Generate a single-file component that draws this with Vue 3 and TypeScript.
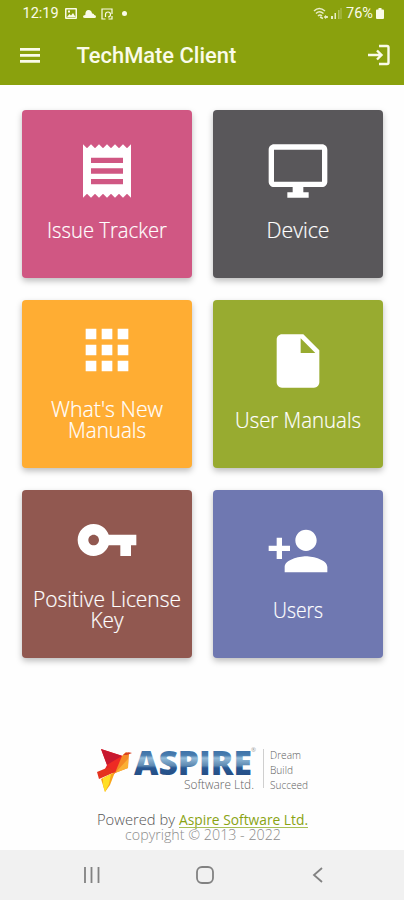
<script setup lang="ts">
interface Tile {
  id: string
  lines: string[]
  widths: number[]
  color: string
  path: string
}

const tiles: Tile[] = [
  {
    id: 'issues',
    lines: ['Issue Tracker'],
    widths: [120],
    color: '#d05783',
    path: 'M18 17H6v-2h12v2zm0-4H6v-2h12v2zm0-4H6V7h12v2zM3 22l1.5-1.5L6 22l1.5-1.5L9 22l1.5-1.5L12 22l1.5-1.5L15 22l1.5-1.5L18 22l1.5-1.5L21 22V2l-1.5 1.5L18 2l-1.5 1.5L15 2l-1.5 1.5L12 2l-1.5 1.5L9 2 7.5 3.5 6 2 4.5 3.5 3 2v20z',
  },
  {
    id: 'device',
    lines: ['Device'],
    widths: [63],
    color: '#59575a',
    path: 'M21 2H3c-1.1 0-2 .9-2 2v12c0 1.1.9 2 2 2h7v2H8v2h8v-2h-2v-2h7c1.1 0 2-.9 2-2V4c0-1.1-.9-2-2-2zm0 14H3V4h18v12z',
  },
  {
    id: 'news',
    lines: ["What's New", 'Manuals'],
    widths: [112, 78],
    color: '#ffad33',
    path: 'M4 8h4V4H4v4zm6 12h4v-4h-4v4zm-6 0h4v-4H4v4zm0-6h4v-4H4v4zm6 0h4v-4h-4v4zm6-10v4h4V4h-4zm-6 4h4V4h-4v4zm6 6h4v-4h-4v4zm0 6h4v-4h-4v4z',
  },
  {
    id: 'manuals',
    lines: ['User Manuals'],
    widths: [126],
    color: '#98ab30',
    path: 'M6 2c-1.1 0-1.99.9-1.99 2L4 20c0 1.1.89 2 1.99 2H18c1.1 0 2-.9 2-2V8l-6-6H6zm7 7V3.5L18.5 9H13z',
  },
  {
    id: 'license',
    lines: ['Positive License', 'Key'],
    widths: [148, 33],
    color: '#915850',
    path: 'M12.65 10C11.83 7.67 9.61 6 7 6c-3.31 0-6 2.69-6 6s2.69 6 6 6c2.61 0 4.83-1.67 5.65-4H17v4h4v-4h2v-4H12.65zM7 14c-1.1 0-2-.9-2-2s.9-2 2-2 2 .9 2 2-.9 2-2 2z',
  },
  {
    id: 'users',
    lines: ['Users'],
    widths: [50],
    color: '#6f78b1',
    path: 'M15 12c2.21 0 4-1.79 4-4s-1.79-4-4-4-4 1.79-4 4 1.79 4 4 4zm-9-2V7H4v3H1v2h3v3h2v-3h3v-2H6zm9 4c-2.67 0-8 1.34-8 4v2h16v-2c0-2.66-5.33-4-8-4z',
  },
]
</script>

<template>
  <div class="screen">
    <header class="header">
      <div class="status">
        <span class="clock">12:19</span>
        <svg class="picture" viewBox="0 0 12 11"><path fill-rule="evenodd" d="M1 0h10q1 0 1 1v9q0 1-1 1H1q-1 0-1-1V1q0-1 1-1zm.5 1.5v8h9v-8zM2 9l2.500-3 1.500 1.500L8 5l2.500 4zM3 2.500h2v2H3z" /></svg>
        <svg class="cloud" viewBox="0 0 13 8"><path d="M2 8Q0 8 0 6.500T2.300 5Q2.300 0 5.500 0T9 3.500Q11 3 11.200 5 13 5 13 6.500T11.500 8z" /></svg>
        <svg class="note" viewBox="0 0 12 12"><path d="M11 6V1H1v10h3.500M4.500 9V6.500q0-2.500 2.500-2.500t2.500 2.500T7 9M7.500 11H11V8" /></svg>
        <i class="dot"></i>
        <div class="signals">
          <svg class="wifi" viewBox="0 0 30 13">
            <path d="M1 4q5-5 11 0M3 6.500q3.500-3.500 7.500 0M5 9q2-2 4 0M7 10l3 1.500M11 10h4" fill="none" stroke="currentColor" stroke-width="1.500" />
            <path d="M12 8l3 2-3 2zM18 9h2v3h-2zM21.500 6h1.500v6h-1.500z" />
            <path d="M25 3h1.500v9H25zM27.500 1h1v11h-1z" opacity=".45" />
          </svg>
          <span class="percent">76%</span>
          <svg class="battery" viewBox="0 0 8 11"><path d="M2.500 0h3v1.500H7q1 0 1 1V10q0 1-1 1H1q-1 0-1-1V2.500q0-1 1-1h1.500z" /></svg>
        </div>
      </div>
      <div class="toolbar">
        <svg class="menu" viewBox="0 0 20 15"><path d="M0 0h20v2.800H0zM0 6h20v2.800H0zM0 12h20v2.800H0z" /></svg>
        <h1>TechMate Client</h1>
        <svg class="login" viewBox="0 0 24 22"><path d="M12 2h8q1.500 0 1.500 1.500v15q0 1.500-1.500 1.500h-8M1 11h13M10 6.500l4.500 4.500-4.500 4.500" /></svg>
      </div>
    </header>

    <main class="grid">
      <button v-for="tile in tiles" :key="tile.id" class="tile" :style="{ backgroundColor: tile.color }">
        <svg class="icon" viewBox="0 0 24 24"><path :d="tile.path" /></svg>
        <svg v-for="(line, i) in tile.lines" :key="line" class="label" viewBox="0 0 170 21">
          <text x="85" y="18" text-anchor="middle" :textLength="tile.widths[i]" lengthAdjust="spacingAndGlyphs">{{ line }}</text>
        </svg>
      </button>
    </main>

    <footer class="footer">
      <svg class="logo" viewBox="0 0 214 50">
        <defs>
          <linearGradient id="steel" x1="0" y1="0" x2="0" y2="1">
            <stop offset="0" stop-color="#285c9b" />
            <stop offset=".34" stop-color="#487cae" />
            <stop offset=".4" stop-color="#94bbd8" />
            <stop offset=".57" stop-color="#5d89b2" />
            <stop offset=".62" stop-color="#285792" />
            <stop offset="1" stop-color="#234576" />
          </linearGradient>
        </defs>
        <path fill="#e5202a" d="M4 4l22 7 3 6-12 12-9-5 2-4z" />
        <path fill="#c81930" d="M4 4l6 16 15-9z" />
        <path fill="#ee2a24" d="M10 20l15-9 3 6-10 11z" />
        <path fill="#e5331f" d="M0 27l12-5 6 5-16 7z" />
        <path fill="#f58a25" d="M25 11l4-4 3 2-1 14-13 5z" />
        <path fill="#fbb034" d="M31 14v9l-13 5z" />
        <path fill="#d94122" d="M26 10q3-4 9-2l-5 2z" />
        <path fill="#f9a51b" d="M4 34l14-7-5 13-5 7z" />
        <path fill="#ffdf26" d="M6 33l8-4-2 10-4 8-2-7z" />
        <text class="brand" x="37" y="30" textLength="118" lengthAdjust="spacingAndGlyphs">ASPIRE</text>
        <text class="reg" x="154" y="7">®</text>
        <text class="soft" x="87" y="44" textLength="70" lengthAdjust="spacingAndGlyphs">Software Ltd.</text>
        <path d="M166.500 4v39" stroke="#cfcfcf" />
        <text class="motto" x="173" y="14" textLength="31" lengthAdjust="spacingAndGlyphs">Dream</text>
        <text class="motto" x="173" y="29" textLength="23" lengthAdjust="spacingAndGlyphs">Build</text>
        <text class="motto" x="173" y="44" textLength="38" lengthAdjust="spacingAndGlyphs">Succeed</text>
      </svg>
      <svg class="credits" viewBox="0 0 214 34">
        <text class="powered" x="0" y="16" textLength="78" lengthAdjust="spacingAndGlyphs">Powered by</text>
        <a href="#"><text class="link" x="82" y="16" textLength="129" lengthAdjust="spacingAndGlyphs">Aspire Software Ltd.</text></a>
        <path d="M82 18.500h129" stroke="#a7bf55" />
        <text class="copy" x="28" y="31" textLength="156" lengthAdjust="spacingAndGlyphs">copyright © 2013 - 2022</text>
      </svg>
    </footer>

    <nav class="nav">
      <svg viewBox="0 0 20 20"><path d="M3 2v16M9.500 2v16M16.500 2v16" /></svg>
      <svg viewBox="0 0 20 20"><rect x="2" y="2" width="16" height="16" rx="5" /></svg>
      <svg viewBox="0 0 20 20"><path d="M14 3l-8 7 8 7" /></svg>
    </nav>
  </div>
</template>

<style>
body {
  margin: 0;
  background: #fff;
}
</style>

<style scoped>
.screen {
  display: flex;
  flex-direction: column;
  width: 404px;
  height: 900px;
  overflow: hidden;
  background: #fefefe;
  font-family: "Open Sans", "Noto Sans", sans-serif;
}
svg {
  display: block;
  flex: none;
}
.header {
  box-sizing: border-box;
  height: 85px;
  flex: none;
  background: #8aa10d;
  color: #fafbe9;
  fill: currentColor;
  font-family: Roboto, sans-serif;
}
.status {
  display: flex;
  align-items: center;
  height: 27px;
  padding: 0 20px 0 22.5px;
  font-size: 14.5px;
}
.clock {
  width: 42.5px;
}
.picture {
  width: 12px;
  height: 11px;
}
.cloud {
  width: 13px;
  height: 8px;
  margin-left: 6px;
}
.note {
  width: 12px;
  height: 12px;
  margin-left: 5px;
  fill: none;
  stroke: currentColor;
  stroke-width: 1.2;
}
.dot {
  width: 5px;
  height: 5px;
  margin-left: 9px;
  border-radius: 50%;
  background: currentColor;
}
.signals {
  display: flex;
  align-items: center;
  margin-left: auto;
}
.wifi {
  width: 30px;
  height: 13px;
  margin-right: 3px;
  opacity: .85;
}
.percent {
  width: 29px;
  font-size: 14.5px;
}
.battery {
  width: 8px;
  height: 11px;
  margin-left: 1px;
}
.toolbar {
  display: flex;
  align-items: center;
  height: 56px;
  padding: 0 13px 0 20px;
}
.menu {
  width: 20px;
  height: 15px;
}
h1 {
  margin: 2px 0 0 36.5px;
  font-size: 21.9px;
  font-weight: 500;
  line-height: 28px;
  white-space: nowrap;
}
.login {
  width: 24px;
  height: 22px;
  margin-left: auto;
  fill: none;
  stroke: currentColor;
  stroke-width: 2.4;
}
.grid {
  display: grid;
  grid-template-columns: 170px 170px;
  grid-auto-rows: 168px;
  gap: 22px 21px;
  padding: 25px 0 0 22px;
}
.tile {
  display: flex;
  flex-direction: column;
  align-items: center;
  justify-content: center;
  padding: 0 0 9px;
  border: 0;
  border-radius: 4px;
  box-shadow: 0 3px 6px rgba(0, 0, 0, .26);
}
.icon {
  width: 64px;
  height: 64px;
  margin-bottom: 17px;
  fill: #fff;
}
.label {
  width: 170px;
  height: 21px;
  overflow: visible;
  fill: #fff;
  font-family: "Open Sans", "Noto Sans", sans-serif;
  font-size: 22px;
  font-weight: 300;
  stroke: #fff;
  stroke-width: .2;
}
.footer {
  display: flex;
  flex-direction: column;
  padding: 86.5px 0 0 97px;
}
.logo {
  width: 214px;
  height: 50px;
  overflow: visible;
}
.brand {
  fill: url(#steel);
  font-size: 33px;
  font-weight: 800;
}
.reg {
  fill: #999;
  font-size: 6px;
}
.soft {
  fill: #606060;
  font-size: 13.5px;
  font-weight: 300;
}
.motto {
  fill: #5c5c5c;
  font-size: 11px;
  font-weight: 300;
}
.credits {
  width: 214px;
  height: 34px;
  margin-top: 14px;
  overflow: visible;
  font-size: 15px;
}
.powered {
  fill: #555;
  font-weight: 300;
}
.link {
  fill: #89a313;
}
.copy {
  fill: #8c8c8c;
  font-size: 14.5px;
  font-weight: 300;
}
.nav {
  display: flex;
  align-items: center;
  justify-content: space-between;
  box-sizing: border-box;
  height: 50px;
  margin-top: auto;
  flex: none;
  padding: 0 76px 0 82px;
  background: #f1f1f1;
}
.nav svg {
  width: 20px;
  height: 20px;
  fill: none;
  stroke: #828282;
  stroke-width: 1.8;
}
</style>
